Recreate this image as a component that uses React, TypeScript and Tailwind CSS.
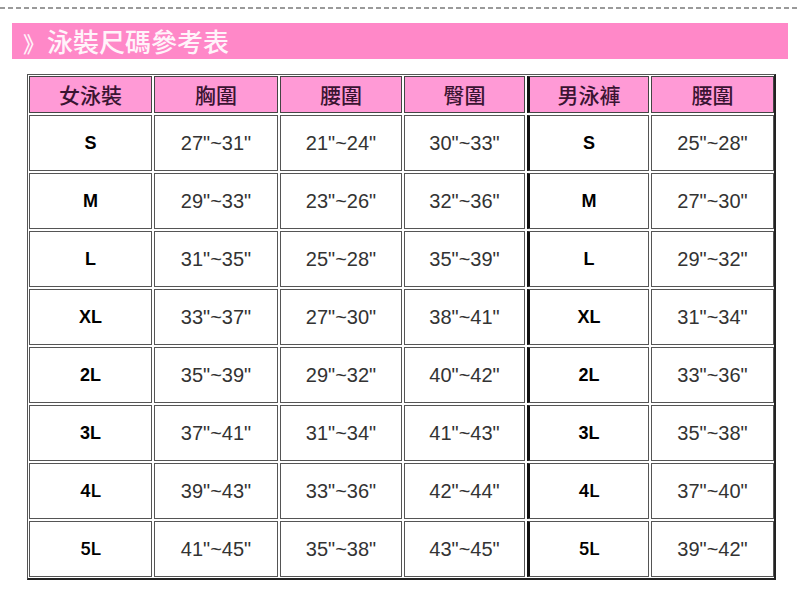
const women = [
  ['S', '27"~31"', '21"~24"', '30"~33"'],
  ['M', '29"~33"', '23"~26"', '32"~36"'],
  ['L', '31"~35"', '25"~28"', '35"~39"'],
  ['XL', '33"~37"', '27"~30"', '38"~41"'],
  ['2L', '35"~39"', '29"~32"', '40"~42"'],
  ['3L', '37"~41"', '31"~34"', '41"~43"'],
  ['4L', '39"~43"', '33"~36"', '42"~44"'],
  ['5L', '41"~45"', '35"~38"', '43"~45"'],
]

const men = [
  ['S', '25"~28"'],
  ['M', '27"~30"'],
  ['L', '29"~32"'],
  ['XL', '31"~34"'],
  ['2L', '33"~36"'],
  ['3L', '35"~38"'],
  ['4L', '37"~40"'],
  ['5L', '39"~42"'],
]

const headers = ['女泳裝', '胸圍', '腰圍', '臀圍', '男泳褲', '腰圍']

const cjk = "font-['Noto_Sans_CJK_TC','Noto_Sans_CJK_SC',sans-serif]"
const arial = "font-['Liberation_Sans',Arial,sans-serif]"

// 4L / 5L are drawn a little lighter than the other size labels
const labelClass = (label: string) =>
  label === '4L' || label === '5L'
    ? "font-['Roboto',sans-serif] text-[19px] font-medium text-black"
    : `${arial} text-[18px] font-bold text-black`

const App = () => (
  <div className="w-[800px] h-[589px] bg-white overflow-hidden">
    {/* dashed rule */}
    <div className="pt-[7px] h-[9px]">
      <div className="h-[2px] bg-[repeating-linear-gradient(90deg,#9a9a9a_0_5px,transparent_5px_8px)]" />
    </div>

    {/* title banner */}
    <div className="mt-[14px] ml-[12px] w-[776px] h-[36px] bg-[#ff88c8] flex items-center pl-[11px]">
      <span className={`${cjk} text-[#fff4fa] text-[26px] leading-none font-medium`}>
        <span className="inline-block w-[24px] text-[22px]">》</span>泳裝尺碼參考表
      </span>
    </div>

    {/* size table */}
    <div className="mt-[15px] ml-[27px] w-[749px] border-l border-t border-[#555] border-r-2 border-b-2 border-r-[#222] border-b-[#222] p-[1px]">
      <div className="grid grid-cols-[123px_124px_122px_121px_122px_123px] gap-[2px]">
        {headers.map((h, i) => (
          <div
            key={i}
            className={`h-[37px] bg-[#ff9ad6] border border-[#444] flex items-center justify-center ${cjk} text-[21px] font-medium text-[#3a1432] ${
              i === 4 ? 'border-l-[3px] border-l-[#111]' : ''
            }`}
          >
            {h}
          </div>
        ))}
        {women.map((row, ri) => (
          <>
            {row.map((v, ci) => (
              <div
                key={`w${ri}-${ci}`}
                className={`h-[56px] border border-[#555] flex items-center justify-center ${
                  ci === 0 ? labelClass(v) : `${arial} text-[20px] text-[#333]`
                }`}
              >
                {v}
              </div>
            ))}
            {men[ri].map((v, ci) => (
              <div
                key={`m${ri}-${ci}`}
                className={`h-[56px] border border-[#555] flex items-center justify-center ${
                  ci === 0 ? `${labelClass(v)} border-l-[3px] border-l-[#111]` : `${arial} text-[20px] text-[#333]`
                }`}
              >
                {v}
              </div>
            ))}
          </>
        ))}
      </div>
    </div>
  </div>
)

export default App
